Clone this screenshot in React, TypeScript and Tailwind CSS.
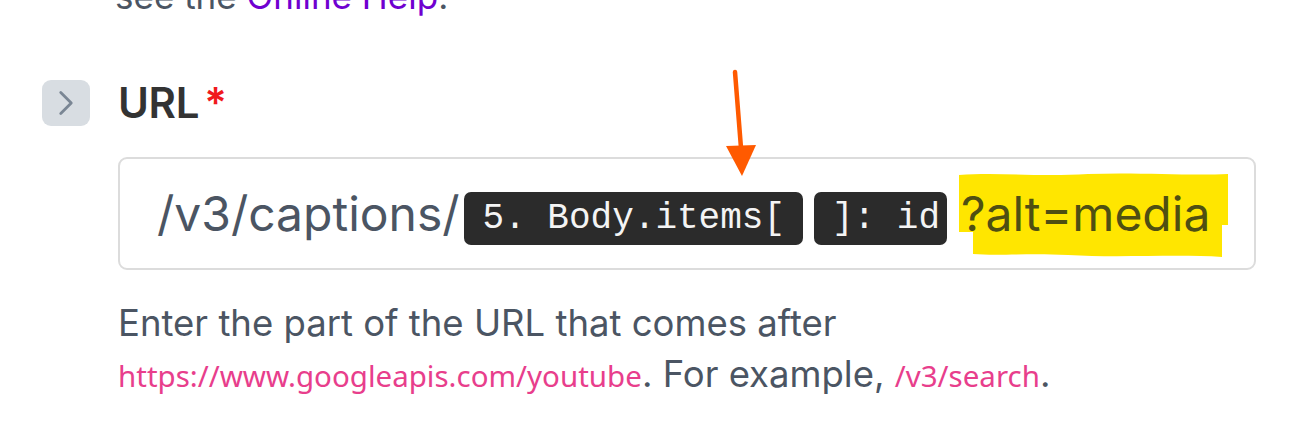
import { ChevronRight } from 'lucide-react'

const sans = { fontFamily: 'Inter, "Noto Sans", sans-serif' }
const code = { fontFamily: '"Noto Sans", sans-serif' }

function Chip({ children, className }: { children: React.ReactNode; className: string }) {
  return (
    <span
      className={`inline-flex items-center h-[53px] rounded-[7px] bg-[#2b2b2b] text-[#f4f4f4] text-[36px] leading-none whitespace-pre ${className}`}
      style={{ fontFamily: '"Liberation Mono", "Courier New", monospace' }}
    >
      {children}
    </span>
  )
}

export default function App() {
  return (
    <div className="relative w-[1294px] h-[435px] overflow-hidden bg-white text-[#4b5563]" style={sans}>
      <p className="ml-[115px] -mt-[28px] text-[35px] leading-[48px]">
        see the <span className="text-[#7000d0]">Online Help</span>.
      </p>

      <div className="flex items-center mt-[60px]">
        <div className="ml-[42px] w-[48px] h-[46px] rounded-[9px] bg-[#d8dde2] flex items-center justify-center">
          <ChevronRight size={42} strokeWidth={1.6} className="text-[#7a8694]" />
        </div>
        <h2 className="ml-[28px] text-[42px] font-semibold text-[#333333] leading-none tracking-[-0.3px]">
          URL<span className="ml-[5px] text-[#f0191c]">*</span>
        </h2>
      </div>

      <div className="relative ml-[118px] mt-[31px] w-[1138px] h-[113px] border-2 border-[#dcdcdc] rounded-[9px] flex items-center pl-[37px]">
        <svg className="absolute left-[838px] top-[13px]" width="270" height="86" viewBox="0 0 270 86">
          <path
            d="M1 3 C40 0 80 5 130 2 C180 0 230 4 270 2 L270 53 L264 53 L264 85 C220 82 160 86 110 83 C70 81 40 84 15 82 L15 60 L1 60 Z"
            fill="#ffe600"
          />
        </svg>
        <span className="text-[48px] text-[#4b5563]">/v3/captions/</span>
        <span className="ml-[4px] mt-[10px] flex gap-[11px]">
          <Chip className="pl-[19px] pr-[18px]">5. Body.items[</Chip>
          <Chip className="pl-[18px] pr-[7px]">]: id</Chip>
        </span>
        <span className="relative ml-[14px] text-[48px] text-[#4f4f12]">?alt=media</span>
      </div>

      <div className="ml-[118px] mt-[28px] text-[36.5px] leading-[51px] text-[#4b5563]">
        <p>Enter the part of the URL that comes after</p>
        <p>
          <span className="text-[#e83e8c] text-[29.5px]" style={code}>https://www.googleapis.com/youtube</span>. For example,{' '}
          <span className="text-[#e83e8c] text-[29.5px]" style={code}>/v3/search</span>.
        </p>
      </div>

      <svg className="absolute left-[722px] top-[68px]" width="40" height="112" viewBox="0 0 40 112">
        <path d="M13 4 L19 80" stroke="#ff5a00" strokeWidth="4.5" strokeLinecap="round" />
        <path d="M4 78 L34 77 L20 108 Z" fill="#ff5a00" />
      </svg>
    </div>
  )
}
